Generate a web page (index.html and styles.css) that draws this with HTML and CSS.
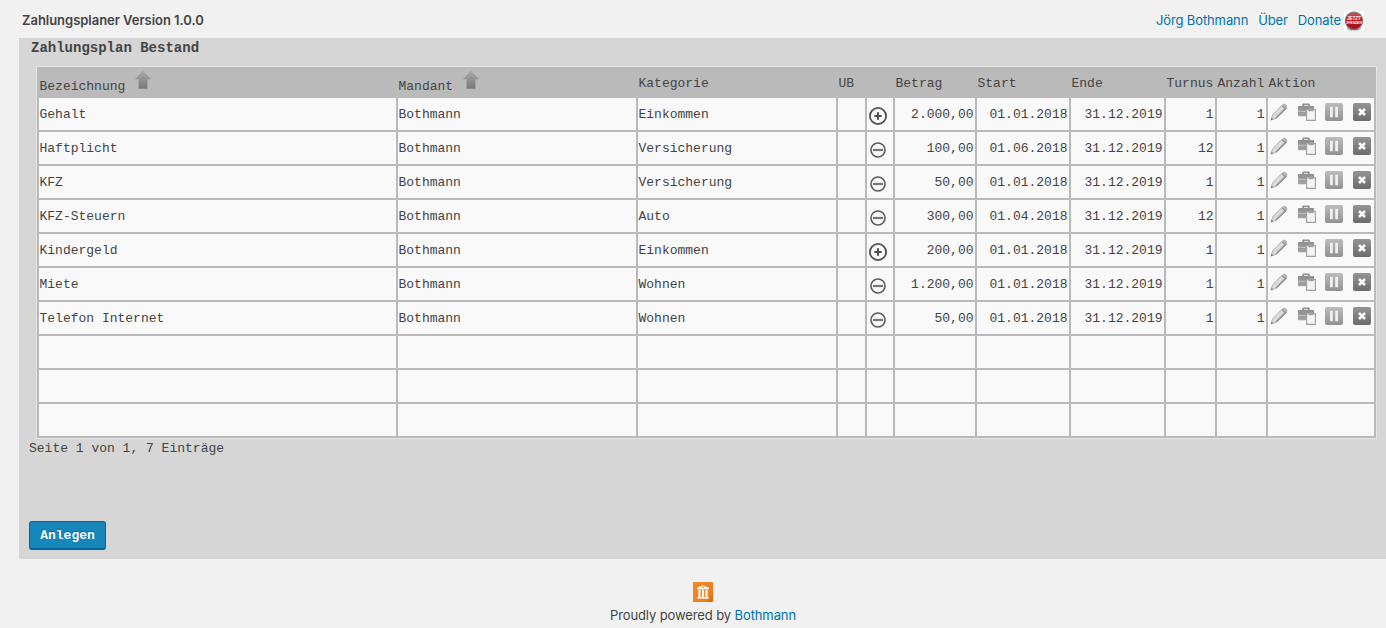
FILE: index.html
```html
<!DOCTYPE html>
<html lang="de">
<head>
<meta charset="utf-8">
<title>Zahlungsplaner</title>
<link rel="stylesheet" href="styles.css">
</head>
<body>
<svg class="defs" width="0" height="0" aria-hidden="true">
  <defs>
    <linearGradient id="g-arrow" x1="0" y1="0" x2="0" y2="1"><stop offset="0" stop-color="#aaa"/><stop offset="1" stop-color="#777"/></linearGradient>
    <linearGradient id="g-pause" x1="0" y1="0" x2="0" y2="1"><stop offset="0" stop-color="#bcbcbc"/><stop offset="1" stop-color="#929292"/></linearGradient>
    <linearGradient id="g-close" x1="0" y1="0" x2="0" y2="1"><stop offset="0" stop-color="#949494"/><stop offset="1" stop-color="#6c6c6c"/></linearGradient>
    <linearGradient id="g-case" x1="0" y1="0" x2="0" y2="1"><stop offset="0" stop-color="#8b8b8b"/><stop offset="1" stop-color="#a2a2a2"/></linearGradient>
    <linearGradient id="g-red" x1="0" y1="0" x2="0" y2="1"><stop offset="0" stop-color="#d8505a"/><stop offset=".45" stop-color="#c5141f"/><stop offset="1" stop-color="#a90d17"/></linearGradient>
    <linearGradient id="g-orange" x1="0" y1="0" x2="1" y2="1"><stop offset="0" stop-color="#f08a2a"/><stop offset=".75" stop-color="#ec7f20"/><stop offset="1" stop-color="#c9650f"/></linearGradient>
  </defs>
  <symbol id="arrow" viewBox="0 0 18 20"><path d="M9 .8 17 9.2H13.4V18.8H4.6V9.2H1Z" fill="url(#g-arrow)"/></symbol>
  <symbol id="plus" viewBox="0 0 20 20"><circle cx="10" cy="10" r="8.1" fill="none" stroke="#505050" stroke-width="1.8"/><path d="M6.3 10h7.4M10 6.3v7.4" stroke="#505050" stroke-width="2.1"/></symbol>
  <symbol id="minus" viewBox="0 0 20 20"><circle cx="10" cy="10" r="7" fill="none" stroke="#5c5c5c" stroke-width="1.6"/><path d="M5 10h10" stroke="#777" stroke-width="2.2"/></symbol>
  <symbol id="pencil" viewBox="0 0 18 18"><path d="M1 17 2.7 11.6 12.6 1.7Q14.2.4 16 2 17.6 3.8 16.3 5.4L6.4 15.3Z" fill="#dadada" stroke="#aaa" stroke-width=".8"/><path d="M6 15 16.3 4.9" stroke="#909090" stroke-width="1.5"/><path d="M12 2.6 15.5 6" stroke="#8f8f8f" stroke-width="1.2"/><path d="M13 2Q14.5.9 15.8 2.2 17.2 3.7 16 5Z" fill="#aaa"/><path d="m.7 17.3.9-2.6 1.8 1.6Z" fill="#777"/></symbol>
  <symbol id="paste" viewBox="0 0 18 18"><path d="M4.3 3V1.4Q4.3.5 5.3.5h5.4q1 0 1 .9V3h3.7q.7 0 .7.7V13.2H.8Q0 13.2 0 12.4V3.7Q0 3 .8 3Z" fill="url(#g-case)"/><path d="M6 3V1.9h4V3Z" fill="#ddd"/><path d="M0 7.9h8v.9H0Z" fill="#c6c6c6"/><path d="M8.6 6.6h8.8v10.8H8.6Z" fill="#f4f4f4" stroke="#a0a0a0" stroke-width="1.1"/><path d="M10.6 5.3h4.8v2.9h-4.8Z" fill="#a0a0a0"/></symbol>
  <symbol id="pause" viewBox="0 0 18 18"><rect width="18" height="18" rx="2" fill="url(#g-pause)"/><path d="M5 3.7h2.8v10.6H5Zm5.2 0H13v10.6h-2.8Z" fill="#f0f0f0"/></symbol>
  <symbol id="close" viewBox="0 0 18 18"><rect width="18" height="18" rx="2" fill="url(#g-close)"/><path d="m6 6 6 6m0-6-6 6" stroke="#fafafa" stroke-width="2.5"/></symbol>
</svg>

<header class="topbar">
  <strong class="brand">Zahlungsplaner Version 1.0.0</strong>
  <nav class="links">
    <a class="link link-user">Jörg Bothmann</a>
    <a class="link link-about">Über</a>
    <a class="link link-donate">Donate</a>
    <svg class="donate-badge" width="20" height="20" viewBox="0 0 20 20"><path fill="#fff" d="M0 0h20v20H0z"/><ellipse cx="10" cy="17.8" rx="7.5" ry="2" fill="#bbb"/><circle cx="10" cy="9.8" r="9.3" fill="#777"/><circle cx="10" cy="9.8" r="8.1" fill="url(#g-red)"/><text x="10" y="9" class="badge-big">JETZT</text><text x="10" y="13" class="badge-small">SPENDEN</text></svg>
  </nav>
</header>

<main class="panel">
  <h1 class="title">Zahlungsplan Bestand</h1>
  <table class="plan">
    <colgroup><col class="c-name"><col class="c-client"><col class="c-cat"><col class="c-ub"><col class="c-sign"><col class="c-sum"><col class="c-start"><col class="c-end"><col class="c-turn"><col class="c-count"><col class="c-act"></colgroup>
    <thead>
      <tr><th class="sorted"><span class="sort">Bezeichnung<svg class="arrow"><use href="#arrow"/></svg></span></th><th class="sorted"><span class="sort">Mandant<svg class="arrow"><use href="#arrow"/></svg></span></th><th>Kategorie</th><th>UB</th><th></th><th>Betrag</th><th>Start</th><th>Ende</th><th>Turnus</th><th>Anzahl</th><th>Aktion</th></tr>
    </thead>
    <tbody id="rows"></tbody>
  </table>
  <p class="pager">Seite 1 von 1, 7 Einträge</p>
  <button class="create">Anlegen</button>
</main>

<footer class="footer">
  <svg class="bank" width="20" height="20" viewBox="0 0 20 20"><rect width="20" height="20" rx="1" fill="url(#g-orange)"/><path d="M4 7.2V5.8L8 4.2Q10 2.8 12 4.2L16 5.8V7.2ZM5.4 7.8h2.1v7.4H5.4Zm3.5 0h2.2v7.4H8.9Zm3.6 0h2.1v7.4h-2.1ZM4.5 15h11v1.8h-11Z" fill="#fff8ee"/><circle cx="10" cy="5.4" r=".8" fill="#ec7f20"/></svg>
  <p class="powered">Proudly powered by <a class="link">Bothmann</a></p>
</footer>
<script src="app.js"></script>
</body>
</html>
```
FILE: styles.css
```css
body { margin: 0; background: #f1f1f1; color: #444; font: 13px/18px Inter, "Open Sans", sans-serif; overflow: hidden; }
.defs { display: block; height: 0; }
.topbar { display: flex; justify-content: space-between; height: 38px; box-sizing: border-box; padding: 11px 22px 0; }
.brand { font-weight: 600; letter-spacing: -.03px; }
.links { display: flex; letter-spacing: -.12px; }
.link { color: #0073aa; }
.link-user { margin-right: 10px; }
.link-about { margin-right: 10px; }
.link-donate { margin-right: 3px; }
.panel { height: 521px; margin-left: 19px; padding: 1px 9px 0 10px; box-sizing: border-box; background: #d6d6d6; font-family: "Liberation Mono", monospace; }
.title { margin: 0 0 9px 2px; font-size: 14px; line-height: 18px; font-weight: 700; }
.plan { width: 1341px; margin-left: 7px; box-sizing: border-box; table-layout: fixed; border: 1px solid #e5e5e5; border-spacing: 2px; background: #bababa; line-height: 18px; }
.c-name { width: 357px; } .c-client { width: 238px; } .c-cat { width: 198px; } .c-ub { width: 27px; } .c-sign { width: 26px; } .c-sum { width: 80px; }
.c-start { width: 92px; } .c-end { width: 93px; } .c-turn { width: 49px; } .c-count { width: 49px; } .c-act { width: 106px; }
.plan th { height: 27px; box-sizing: border-box; padding: 2px 0 0 .5px; font-weight: 400; text-align: left; vertical-align: middle; white-space: nowrap; }
.plan th.sorted { padding-top: 0; }
.sort { display: flex; align-items: flex-end; height: 27px; }
.sort .arrow { width: 18px; height: 20px; margin: 0 0 6px 8.5px; }
.plan td { height: 32px; box-sizing: border-box; padding: 2px 1.5px 0 .5px; background: #f9f9f9; white-space: nowrap; }
.plan td.num { text-align: right; }
.plan td.sign { padding: 4px 0 0 1px; }
.sign svg { display: block; width: 20px; height: 20px; }
.plan td.act { padding: 0 2px; }
.tools { display: flex; height: 26px; gap: 9.7px; }
.tools svg { width: 18px; height: 18px; margin-top: 2px; }
.pager { margin: 1px 0 0; line-height: 18px; }
.create { display: block; width: 77px; height: 29px; margin-top: 63px; padding: 1px 0 0; border: 1px solid #006799; border-bottom-width: 2px; border-radius: 3px; background: #1787bb; color: #fff; font: 700 13px/24px "Liberation Mono", monospace; text-shadow: 0 -1px 1px #006799; }
.footer { display: flex; flex-direction: column; align-items: center; padding: 23px 0 0 20px; }
.powered { margin: 4px 0 0; letter-spacing: -.11px; }
.badge-big { font: italic 700 4.5px "Liberation Sans", sans-serif; fill: #fff; text-anchor: middle; letter-spacing: 0; }
.badge-small { font: italic 700 3.2px "Liberation Sans", sans-serif; fill: #fff; text-anchor: middle; letter-spacing: 0; }
```
FILE: app.js
```js
const plans = [
  ["Gehalt", "Einkommen", "plus", "2.000,00", "01.01.2018", 1],
  ["Haftplicht", "Versicherung", "minus", "100,00", "01.06.2018", 12],
  ["KFZ", "Versicherung", "minus", "50,00", "01.01.2018", 1],
  ["KFZ-Steuern", "Auto", "minus", "300,00", "01.04.2018", 12],
  ["Kindergeld", "Einkommen", "plus", "200,00", "01.01.2018", 1],
  ["Miete", "Wohnen", "minus", "1.200,00", "01.01.2018", 1],
  ["Telefon Internet", "Wohnen", "minus", "50,00", "01.01.2018", 1]
];
const icon = name => `<svg><use href="#${name}"/></svg>`;
const tools = ["pencil", "paste", "pause", "close"].map(icon).join("");
const filled = plans.map(([name, category, sign, sum, start, turn]) =>
  `<tr><td>${name}</td><td>Bothmann</td><td>${category}</td><td></td><td class="sign">${icon(sign)}</td><td class="num">${sum}</td><td class="num">${start}</td><td class="num">31.12.2019</td><td class="num">${turn}</td><td class="num">1</td><td class="act"><div class="tools">${tools}</div></td></tr>`);
const empty = Array(3).fill("<tr>" + "<td></td>".repeat(11) + "</tr>");
document.getElementById("rows").innerHTML = filled.concat(empty).join("");
```
